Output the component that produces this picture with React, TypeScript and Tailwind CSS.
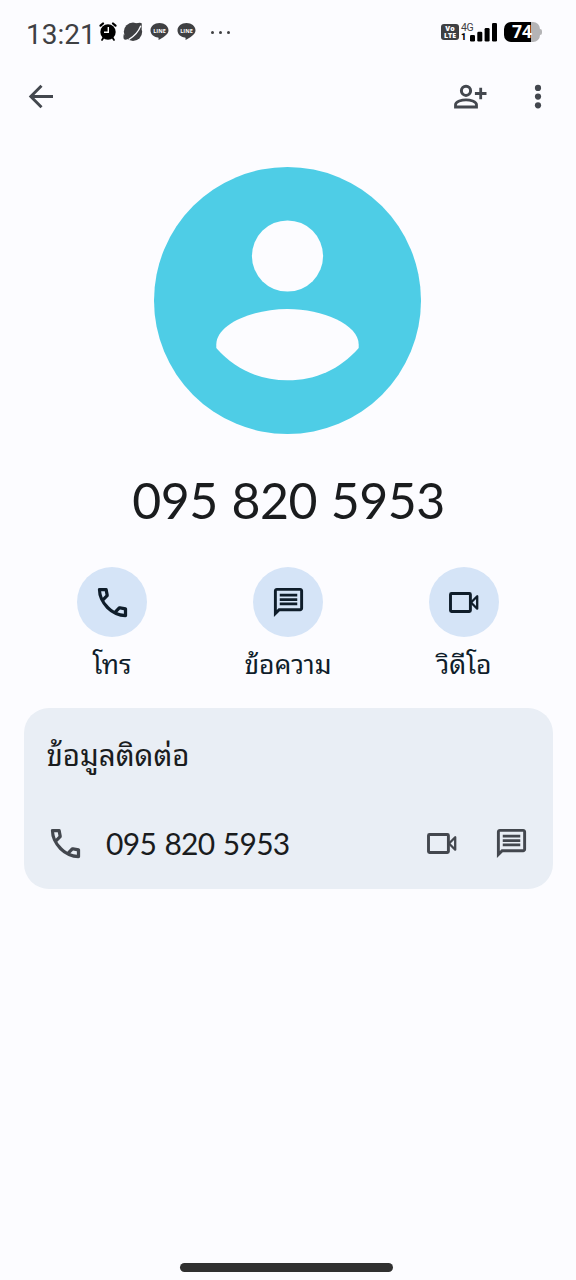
import type { ReactNode } from 'react';

function CallIcon({ className = '' }: { className?: string }) {
  return (
    <svg viewBox="0 -960 960 960" className={`mt-[1px] ml-[1px] h-[39px] w-[39px] shrink-0 fill-current ${className}`}>
      <path d="M798-120q-125 0-247-54.5T329-329Q229-429 174.5-551T120-798q0-18 12-30t30-12h162q14 0 25 9.5t13 22.5l26 140q2 16-1 27t-11 19l-97 98q20 37 47.5 71.5T387-386q31 31 65 57.5t72 48.5l94-94q9-9 23.5-13.5T670-390l138 28q14 4 23 14.5t9 23.5v162q0 18-12 30t-30 12ZM241-600l66-66-17-94h-89q5 41 14 81t26 79Zm358 358q39 17 79.5 27t81.5 13v-88l-94-19-67 67Z" />
    </svg>
  );
}

function ChatIcon() {
  return (
    <svg viewBox="0 0 24 24" className="h-[35px] w-[35px] shrink-0 fill-current">
      <path d="M4 4h16v12H5.17L4 17.17V4m0-2c-1.1 0-1.99.9-1.99 2L2 22l4-4h14c1.1 0 2-.9 2-2V4c0-1.1-.9-2-2-2H4zm2 10h12v1.9H6V12zm0-3h12v1.9H6V9zm0-3h12v1.9H6V6z" />
    </svg>
  );
}

function VideoIcon() {
  return (
    <svg viewBox="0 0 30 21" className="h-[21px] w-[30px] shrink-0" fill="none" stroke="currentColor" strokeLinejoin="round">
      <rect x="1.5" y="1.5" width="19.900" height="18" rx="1" strokeWidth="2.9" />
      <path d="M22 10.5 28.2 4.3v12.4Z" strokeWidth="2.3" />
    </svg>
  );
}

function LineBadge() {
  return (
    <svg viewBox="0 0 19 18" className="h-[18px] w-[19px] shrink-0">
      <path d="M9.500 0C4.500 0 .500 3.200.500 7.400c0 3.600 3.200 6.500 7.500 7.100.700.100.700.700.500 2.500 3.800-2.100 10-5.400 10-9.600C18.500 3.200 14.500 0 9.500 0Z" fill="#3f4043" />
      <text x="9.5" y="9.700" textAnchor="middle" textLength="12.500" lengthAdjust="spacingAndGlyphs" fontSize="5.600" fontWeight="700" fill="#fff" className="font-['Open_Sans',sans-serif]">LINE</text>
    </svg>
  );
}

function StatusBar() {
  return (
    <div className="flex h-16 items-start pl-[26px] pr-[34px] pt-[18px] text-[#3f4043]">
      <span className="w-[73px] font-[Roboto,sans-serif] text-[28px] leading-[34px]">13:21</span>
      <svg viewBox="0 0 18 20" className="mt-[4px] h-5 w-[18px]" fill="none" stroke="#000">
        <circle cx="9" cy="10" r="7.700" fill="#000" stroke="none" />
        <path d="M1.500 3.700 4 1.500M16.500 3.700 14 1.500" strokeWidth="2.200" strokeLinecap="round" />
        <path d="m4.200 16-1.200 1.900M13.800 16l1.200 1.900" strokeWidth="1.800" strokeLinecap="round" />
        <path d="M9.300 5v5.300H5" stroke="#fff" strokeWidth="1.400" />
      </svg>
      <svg viewBox="0 0 20 20" className="ml-[6px] mt-[4px] h-5 w-5">
        <circle cx="10" cy="9.800" r="9.200" fill="#3f4043" />
        <path d="M.800 12Q-.200 17 1.500 17.600 3 18 5 17ZM13 1.200Q18 0 18.800 1.500L18.600 7Z" fill="#3f4043" />
        <path d="M5.600 17.600C11 14.500 15.800 9 17.800 3.800" stroke="#fcfcff" strokeWidth="1.300" fill="none" />
      </svg>
      <div className="ml-[7px] mt-[5px] flex gap-[8px]"><LineBadge /><LineBadge /></div>
      <div className="ml-[15px] mt-[12.500px] flex gap-[5px]">
        <i className="h-[3px] w-[3px] rounded-full bg-current" />
        <i className="h-[3px] w-[3px] rounded-full bg-current" />
        <i className="h-[3px] w-[3px] rounded-full bg-current" />
      </div>
      <div className="ml-auto mt-[6px] flex h-[16px] w-[18px] flex-col items-center justify-center rounded-[3px] bg-[#3f4043] font-['Open_Sans',sans-serif] text-[7px] font-extrabold leading-[7.500px] text-white">
        <span>Vo</span><span>LTE</span>
      </div>
      <div className="ml-[2px] mt-[5px] flex w-[14px] flex-col font-[Roboto,sans-serif] text-[#3f4043]">
        <span className="text-[10.500px] leading-[9px] tracking-[-0.400px]">4G</span>
        <span className="text-[9px] font-black leading-[10px] text-black">1</span>
      </div>
      <svg viewBox="0 0 29 19" className="-ml-[6px] mt-[5px] h-[19px] w-[29px]">
        <rect x="1" y="12" width="5" height="6.500" rx="1.300" />
        <rect x="8.300" y="8.700" width="5" height="9.800" rx="1.300" />
        <rect x="15.600" y="5" width="5" height="13.500" rx="1.300" />
        <rect x="23" y="0" width="5" height="18.500" rx="1.300" />
      </svg>
      <div className="ml-[6px] mt-[4px] flex items-center">
        <div className="flex h-[20px] w-[36px] items-center justify-center rounded-[7px] bg-[linear-gradient(90deg,#000_75%,#b4b4b6_75%)] font-['Open_Sans',sans-serif] text-[17.500px] font-bold leading-none text-white">74</div>
        <div className="h-[6px] w-[2px] rounded-r-full bg-[#b4b4b6]" />
      </div>
    </div>
  );
}

function AppBar() {
  return (
    <div className="flex h-[66px] items-center pl-[28px] pr-[34px] text-[#43474e]">
      <svg viewBox="0 0 26 26" className="h-[26px] w-[26px]" fill="none" stroke="currentColor" strokeWidth="2.900">
        <path d="M25 12.500H3.500M13.500 1.700 2.800 12.500l10.700 10.800" />
      </svg>
      <svg viewBox="0 0 34 26" className="ml-auto h-[26px] w-[34px]" fill="none" stroke="currentColor" strokeWidth="3">
        <circle cx="13" cy="6.800" r="4.600" />
        <path d="M2.500 23v-2.300c0-3.200 6.500-4.900 10.500-4.900s10.500 1.700 10.500 4.900V23Z" strokeWidth="2.800" />
        <path d="M27.700 3.700v11.600M21.900 9.500h11.600" strokeWidth="2.800" />
      </svg>
      <svg viewBox="0 0 8 26" className="ml-[47px] h-[26px] w-[8px] fill-current">
        <circle cx="4" cy="3.900" r="3.100" /><circle cx="4" cy="12.600" r="3.100" /><circle cx="4" cy="21.300" r="3.100" />
      </svg>
    </div>
  );
}

function Action({ label, children }: { label: string; children: ReactNode }) {
  return (
    <div className="flex flex-1 flex-col items-center text-[#0f1d2a]">
      <div className="flex h-[70px] w-[70px] items-center justify-center rounded-full bg-[#d5e4f7]">{children}</div>
      <span className="mt-[7px] h-[38px] whitespace-nowrap font-['Noto_Sans_Thai_Looped','Loma','Garuda','Waree','Noto_Sans',sans-serif] text-[26.500px] leading-[36px]">{label}</span>
    </div>
  );
}

export default function App() {
  return (
    <main className="flex h-[1280px] w-[576px] flex-col overflow-hidden bg-[#fcfcff]">
      <StatusBar />
      <AppBar />
      <svg viewBox="0 0 267 267" className="ml-[154px] mt-[37px] h-[267px] w-[267px] shrink-0">
        <circle cx="133.500" cy="133.500" r="133.500" fill="#4ecde6" />
        <circle cx="133.500" cy="89" r="35.600" fill="#fcfcff" />
        <path d="M62.300 177.500c0-20 36-35.500 71.200-35.500s71.200 15.500 71.200 35.500v3.500c-19 21.500-43 32.300-71.200 32.300S81.300 202.500 62.300 181Z" fill="#fcfcff" />
      </svg>
      <h1 className="mt-[34px] pl-[1px] text-center font-[Lato,sans-serif] text-[50px] leading-[64px] tracking-[-0.500px] text-[#1a1c1e] [word-spacing:1.500px]">095 820 5953</h1>
      <div className="mx-[24px] mt-[35px] flex">
        <Action label="โทร"><CallIcon /></Action>
        <Action label="ข้อความ"><ChatIcon /></Action>
        <Action label="วิดีโอ"><VideoIcon /></Action>
      </div>
      <section className="ml-[23.500px] mt-[26px] h-[181px] w-[529px] shrink-0 rounded-[25px] bg-[#e9eef5] pl-[23px] pr-[26.500px] pt-[26px] text-[#1a1c1e]">
        <h2 className="h-[42px] font-['Noto_Sans_Thai_Looped','Loma','Garuda','Waree','Noto_Sans',sans-serif] text-[29.500px] leading-[37px]">ข้อมูลติดต่อ</h2>
        <div className="mt-[47px] flex h-[40px] items-center">
          <div className="-ml-[2px] flex text-[#43474e]"><CallIcon /></div>
          <span className="ml-[21.500px] font-[Lato,sans-serif] text-[30px] leading-[40px] tracking-[-0.700px] [word-spacing:1.300px]">095 820 5953</span>
          <div className="ml-auto flex items-center gap-[37px] text-[#43474e]"><VideoIcon /><div className="-mr-[3px]"><ChatIcon /></div></div>
        </div>
      </section>
      <div className="mb-[8px] ml-[180px] mt-auto h-[9px] w-[213px] rounded-full bg-[#303030]" />
    </main>
  );
}
